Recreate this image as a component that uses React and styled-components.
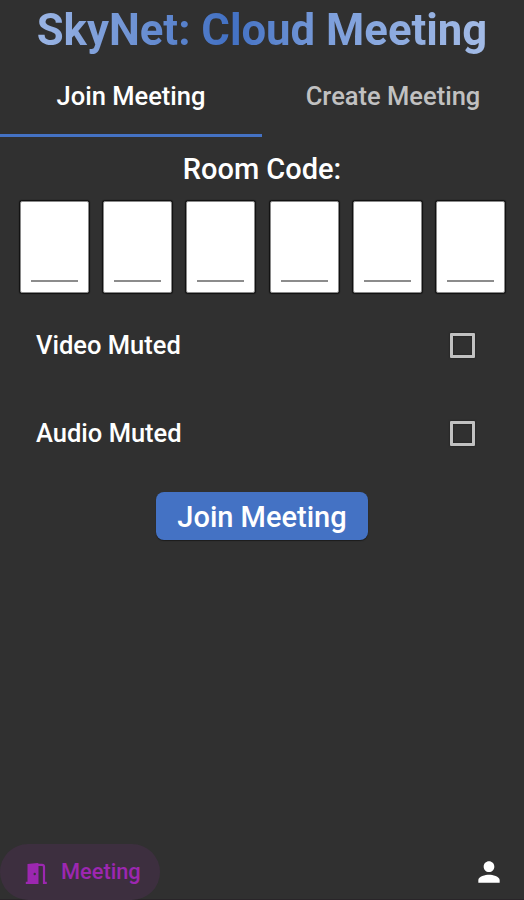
import React, { useState } from 'react';
import styled, { createGlobalStyle } from 'styled-components';
import { MdPerson } from 'react-icons/md';

export default function App() {
    const [tab, setTab] = useState('join');
    const [videoMuted, setVideoMuted] = useState(false);
    const [audioMuted, setAudioMuted] = useState(false);

    return (
        <Screen>
            <GlobalStyle />
            <Title><span>SkyNet: Cloud Meeting</span></Title>

            <Tabs>
                <Tab $active={tab === 'join'} onClick={() => setTab('join')}>
                    <Label $size={25.5}>Join Meeting</Label>
                </Tab>
                <Tab $active={tab === 'create'} onClick={() => setTab('create')}>
                    <Label $size={25.5}>Create Meeting</Label>
                </Tab>
            </Tabs>

            <Heading><Label $size={29}>Room Code:</Label></Heading>
            <CodeRow>
                {[0, 1, 2, 3, 4, 5].map(i => (
                    <CodeBox key={i}><CodeLine /></CodeBox>
                ))}
            </CodeRow>

            <Options>
                <Option>
                    <Label $size={25.5}>Video Muted</Label>
                    <Checkbox $on={videoMuted} onClick={() => setVideoMuted(!videoMuted)} />
                </Option>
                <Option>
                    <Label $size={25.5}>Audio Muted</Label>
                    <Checkbox $on={audioMuted} onClick={() => setAudioMuted(!audioMuted)} />
                </Option>
            </Options>

            <JoinButton><Label $size={29}>Join Meeting</Label></JoinButton>

            <BottomBar>
                <NavPill>
                    <DoorIcon />
                    <Label $size={21.8}>Meeting</Label>
                </NavPill>
                <MdPerson size={32} />
            </BottomBar>
        </Screen>
    )
}

function DoorIcon() {
    return (
        <svg width="28" height="28" viewBox="0 0 28 28">
            <path d="M5.5 5 15.5 4q1 0 1 1v20H3.8v-2.2h1.7z" fill="currentColor" />
            <path d="M16 5.8h4q2 0 2 2v16h2.8" fill="none" stroke="currentColor" strokeWidth="2.2" />
            <circle cx="12.7" cy="15" r="1.2" fill="#3d2f3f" />
        </svg>
    )
}

const GlobalStyle = createGlobalStyle`
    * {
        box-sizing: border-box;
    }
    body {
        margin: 0;
        background: #303030;
        font-family: Roboto, sans-serif;
    }
    button {
        border: none;
        padding: 0;
        background: none;
        font-family: inherit;
    }
`

const Screen = styled.div`
    display: flex;
    flex-direction: column;
    width: 524px;
    height: 900px;
    overflow: hidden;
    background: #303030;
    color: #fff;
`

const Label = styled.span`
    font-size: ${props => props.$size}px;
    font-weight: 500;
    line-height: 1.2;
    white-space: nowrap;
`

const Title = styled.h1`
    display: flex;
    justify-content: center;
    height: 59px;
    margin: 0;
    font-size: 43.7px;
    font-weight: 700;
    line-height: 60px;
    white-space: nowrap;

    span {
        background: linear-gradient(90deg, #9bb5e4 0%, #4472c4 42%, #4472c4 44%, #7d9fdb 65%, #a3bbe6 100%);
        background-clip: text;
        -webkit-background-clip: text;
        color: transparent;
    }
`

const Tabs = styled.div`
    display: flex;
    height: 78px;
`

const Tab = styled.button`
    flex: 1;
    border-bottom: 3px solid ${props => props.$active ? '#4472c4' : 'transparent'};
    color: ${props => props.$active ? '#fff' : '#c1c1c1'};
`

const Heading = styled.div`
    display: flex;
    justify-content: center;
    height: 64px;
    padding-top: 15px;
`

const CodeRow = styled.div`
    display: flex;
    justify-content: space-between;
    padding: 0 19px 0 20px;
`

const CodeBox = styled.div`
    display: flex;
    align-items: flex-end;
    justify-content: center;
    width: 69px;
    height: 92px;
    padding-bottom: 10px;
    border: 1px solid #8a8a8a;
    border-radius: 2px;
    background: #fff;
    box-shadow: 0 0 1px 1px #101010;
`

const CodeLine = styled.div`
    width: 47px;
    height: 2px;
    background: #8c8c8c;
`

const Options = styled.div`
    display: flex;
    flex-direction: column;
    padding: 8px 49px 0 36px;
`

const Option = styled.div`
    display: flex;
    align-items: center;
    justify-content: space-between;
    height: 88px;
`

const Checkbox = styled.button`
    width: 25px;
    height: 25px;
    border: 3px solid #c1c1c1;
    border-radius: 1px;
    background: ${props => props.$on ? '#4472c4' : 'transparent'};
    box-shadow: 0 0 2px #181818, inset 0 0 2px #181818;
`

const JoinButton = styled.button`
    align-self: center;
    width: 212px;
    height: 48px;
    margin-top: 15px;
    padding-top: 2px;
    border-radius: 8px;
    background: #4472c4;
    box-shadow: 0 1px 1px #1c1c1c;
    color: #fff;
`

const BottomBar = styled.div`
    display: flex;
    align-items: center;
    justify-content: space-between;
    height: 56px;
    margin-top: auto;
    padding-right: 19px;
    border-bottom: 1px solid #292529;
`

const NavPill = styled.div`
    display: flex;
    align-items: center;
    gap: 11px;
    width: 160px;
    height: 56px;
    padding: 2px 0 0 22px;
    border-radius: 28px;
    background: #3d2f3f;
    color: #9c27b0;
`
